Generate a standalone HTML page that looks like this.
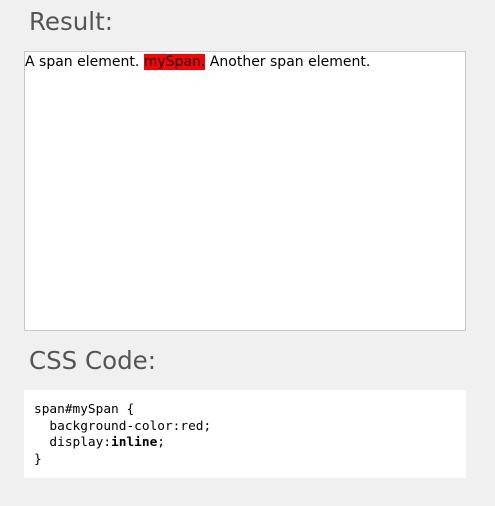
<!DOCTYPE html>
<html><head><style>
body{margin:0;background:#f0f0f0;width:495px;height:506px;overflow:hidden;font-family:"DejaVu Sans","Liberation Sans",sans-serif;}
h2{position:absolute;margin:0;font-weight:normal;font-size:24.5px;color:#555;left:29px;}
#r{position:absolute;left:24px;top:51px;width:440px;height:278px;background:#fff;border:1px solid #c8c8c8;font-size:14px;line-height:21px;color:#000;}
#c{position:absolute;left:24px;top:390px;width:442px;height:88px;background:#fff;}
pre{margin:0;position:absolute;left:10px;top:12px;font-family:"DejaVu Sans Mono","Liberation Mono",monospace;font-size:12.8px;line-height:16.7px;color:#000;}
</style></head><body>
<h2 style="top:7px">Result:</h2>
<div id="r">A span element. <span style="background:red">mySpan.</span> Another span element.</div>
<h2 style="top:346px">CSS Code:</h2>
<div id="c"><pre>span#mySpan {
  background-color:red;
  display:<b>inline</b>;
}</pre></div>
</body></html>
